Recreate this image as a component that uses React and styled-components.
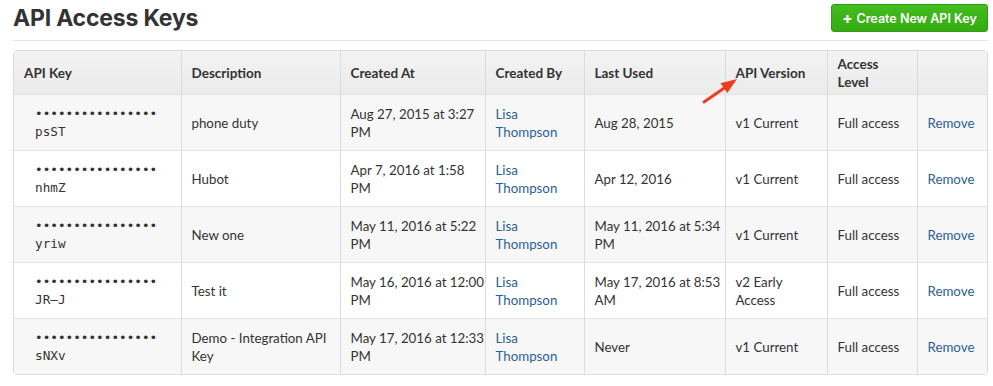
import React from "react";
import styled, { createGlobalStyle } from "styled-components";

const GlobalStyle = createGlobalStyle`
  body {
    margin: 0;
    background: #fff;
    font-family: "Lato", "Inter", Arial, sans-serif;
    color: #333;
  }
`;

const Page = styled.div`
  padding: 0 5px 0 13px;
`;

const TopBar = styled.div`
  display: flex;
  justify-content: space-between;
  align-items: center;
  height: 41px;
  border-bottom: 1px solid #e6e6e6;
  box-sizing: border-box;
  padding-bottom: 4px;
`;

const Title = styled.h1`
  margin: 0;
  font-family: "Inter", Arial, sans-serif;
  font-size: 23px;
  font-weight: 700;
  color: #333;
  letter-spacing: -0.2px;
`;

const CreateButton = styled.button`
  height: 28px;
  width: 157px;
  padding: 0;
  border: 1px solid #2f9a12;
  border-radius: 3px;
  background: linear-gradient(#43bd1f, #35aa12);
  color: #fff;
  font-family: "Inter", Arial, sans-serif;
  font-size: 12.5px;
  font-weight: 600;
  cursor: pointer;
  display: flex;
  align-items: center;
  justify-content: center;
  gap: 4px;
`;

const Plus = styled.span`
  font-size: 15px;
  font-weight: 800;
`;

const TableWrap = styled.div`
  position: relative;
  margin-top: 9px;
  border: 1px solid #dcdcdc;
  border-radius: 4px;
  overflow: hidden;
`;

const Table = styled.table`
  width: 100%;
  border-collapse: collapse;
  table-layout: fixed;
  font-size: 13.3px;
`;

const HeadCell = styled.th`
  height: 43px;
  padding: 0 2px 0 10px;
  text-align: left;
  font-weight: 700;
  font-size: 13.5px;
  line-height: 18px;
  white-space: pre;
  color: #333;
  background: linear-gradient(#f3f3f3, #ebebeb);
  border-left: 1px solid #dcdcdc;
  border-bottom: 1px solid #e4e4e4;
  &:first-child {
    border-left: none;
  }
`;

const Row = styled.tr`
  background: ${(p) => (p.$shaded ? "#f7f7f7" : "#fff")};
`;

const Cell = styled.td`
  height: 55px;
  padding: ${(p) => (p.$key ? "0 2px 0 21px" : "0 2px 0 10px")};
  vertical-align: middle;
  line-height: 18px;
  white-space: pre;
  color: ${(p) => (p.$link ? "#2b6194" : "#333")};
  border-left: 1px solid #dcdcdc;
  border-top: 1px solid #e4e4e4;
  &:first-child {
    border-left: none;
  }
`;

const KeyText = styled.div`
  font-family: "DejaVu Sans Mono", "Liberation Mono", monospace;
  font-size: 12.7px;
  line-height: 18px;
  color: #333;
`;

const Arrow = styled.svg`
  position: absolute;
  left: 686px;
  top: 24px;
`;

const columns = [
  { title: "API Key", width: 167 },
  { title: "Description", width: 159 },
  { title: "Created At", width: 145 },
  { title: "Created By", width: 99 },
  { title: "Last Used", width: 141 },
  { title: "API Version", width: 102 },
  { title: "Access\nLevel", width: 90 },
  { title: "", width: 72 },
];

const keys = [
  { key: "psST", desc: "phone duty", created: "Aug 27, 2015 at 3:27\nPM", used: "Aug 28, 2015", version: "v1 Current" },
  { key: "nhmZ", desc: "Hubot", created: "Apr 7, 2016 at 1:58\nPM", used: "Apr 12, 2016", version: "v1 Current" },
  { key: "yriw", desc: "New one", created: "May 11, 2016 at 5:22\nPM", used: "May 11, 2016 at 5:34\nPM", version: "v1 Current" },
  { key: "JR–J", desc: "Test it", created: "May 16, 2016 at 12:00\nPM", used: "May 17, 2016 at 8:53\nAM", version: "v2 Early\nAccess" },
  { key: "sNXv", desc: "Demo - Integration API\nKey", created: "May 17, 2016 at 12:33\nPM", used: "Never", version: "v1 Current" },
];

export default function App() {
  return (
    <Page>
      <GlobalStyle />
      <TopBar>
        <Title>API Access Keys</Title>
        <CreateButton>
          <Plus>+</Plus> Create New API Key
        </CreateButton>
      </TopBar>
      <TableWrap>
        <Table>
          <colgroup>
            {columns.map((c, i) => (
              <col key={i} style={{ width: c.width }} />
            ))}
          </colgroup>
          <thead>
            <tr>
              {columns.map((c, i) => (
                <HeadCell key={i}>{c.title}</HeadCell>
              ))}
            </tr>
          </thead>
          <tbody>
            {keys.map((k, i) => (
              <Row key={k.key} $shaded={i % 2 === 0}>
                <Cell $key>
                  <KeyText>••••••••••••••••</KeyText>
                  <KeyText>{k.key}</KeyText>
                </Cell>
                <Cell>{k.desc}</Cell>
                <Cell>{k.created}</Cell>
                <Cell $link>{"Lisa\nThompson"}</Cell>
                <Cell>{k.used}</Cell>
                <Cell>{k.version}</Cell>
                <Cell>Full access</Cell>
                <Cell $link>Remove</Cell>
              </Row>
            ))}
          </tbody>
        </Table>
        <Arrow width="40" height="32" viewBox="0 0 40 32">
          <path d="M4 27 L25 12.5" stroke="#ee3d1e" strokeWidth="3" strokeLinecap="round" />
          <path d="M37 4 L20.5 8.2 L27.3 18 Z" fill="#ee3d1e" />
        </Arrow>
      </TableWrap>
    </Page>
  );
}
